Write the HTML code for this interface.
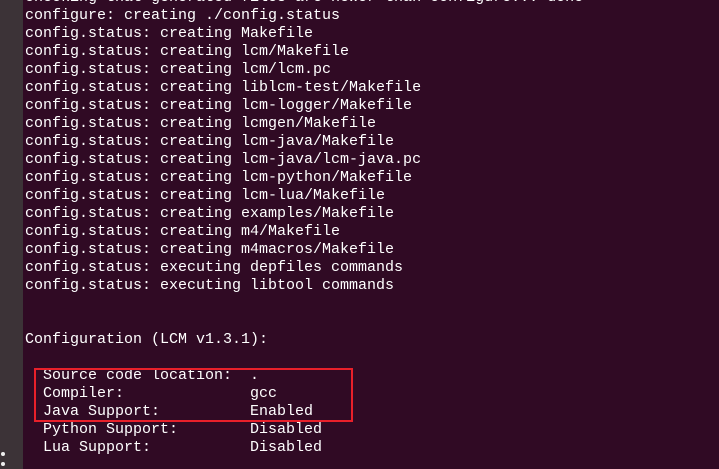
<!DOCTYPE html><html><head><style>
body{margin:0;width:719px;height:469px;overflow:hidden;background:#300a24;position:relative}
#sb{position:absolute;left:0;top:0;width:23px;height:469px;background:#3c3337}
pre{position:absolute;left:25px;top:-11px;margin:0;font:15px/18px "Liberation Mono",monospace;color:#fff;white-space:pre}
#box{position:absolute;left:34px;top:368px;width:315px;height:50px;border:2px solid #e8202a}
.d{position:absolute;left:1px;width:4px;height:4px;border-radius:2px;background:#eee}
</style></head><body><div id="sb"></div>
<div class="d" style="top:452px"></div><div class="d" style="top:462px"></div>
<pre>checking that generated files are newer than configure... done
configure: creating ./config.status
config.status: creating Makefile
config.status: creating lcm/Makefile
config.status: creating lcm/lcm.pc
config.status: creating liblcm-test/Makefile
config.status: creating lcm-logger/Makefile
config.status: creating lcmgen/Makefile
config.status: creating lcm-java/Makefile
config.status: creating lcm-java/lcm-java.pc
config.status: creating lcm-python/Makefile
config.status: creating lcm-lua/Makefile
config.status: creating examples/Makefile
config.status: creating m4/Makefile
config.status: creating m4macros/Makefile
config.status: executing depfiles commands
config.status: executing libtool commands


Configuration (LCM v1.3.1):

  Source code location:  .
  Compiler:              gcc
  Java Support:          Enabled
  Python Support:        Disabled
  Lua Support:           Disabled</pre>
<div id="box"></div>
</body></html>
